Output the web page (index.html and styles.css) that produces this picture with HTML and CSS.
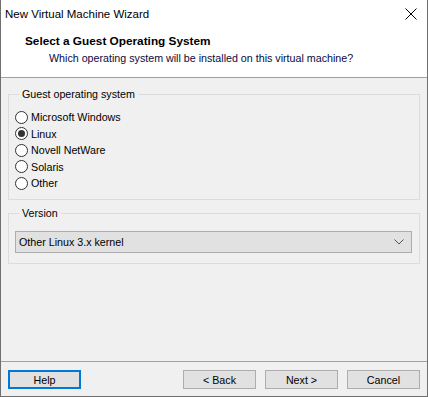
FILE: index.html
```html
<!DOCTYPE html>
<html lang="en">
<head>
    <meta charset="UTF-8">
    <meta name="viewport" content="width=device-width, initial-scale=1.0">
    <title>New Virtual Machine Wizard</title>
    <link rel="stylesheet" href="styles.css">
</head>
<body>
    <div class="window">
        <div class="titlebar">
            <span class="title">New Virtual Machine Wizard</span>
            <svg class="close" width="12" height="12" viewBox="0 0 12 12">
                <path d="M0.5 0.5 L11.5 11.5 M11.5 0.5 L0.5 11.5" stroke="#000" stroke-width="1" fill="none"/>
            </svg>
        </div>

        <div class="header">
            <h1>Select a Guest Operating System</h1>
            <p>Which operating system will be installed on this virtual machine?</p>
        </div>

        <div class="content">
            <fieldset class="group">
                <legend>Guest operating system</legend>
                <label class="radio"><span class="dot"></span>Microsoft Windows</label>
                <label class="radio checked"><span class="dot"></span>Linux</label>
                <label class="radio"><span class="dot"></span>Novell NetWare</label>
                <label class="radio"><span class="dot"></span>Solaris</label>
                <label class="radio"><span class="dot"></span>Other</label>
            </fieldset>

            <fieldset class="group version">
                <legend>Version</legend>
                <div class="combo">
                    <span>Other Linux 3.x kernel</span>
                    <svg width="10" height="6" viewBox="0 0 10 6">
                        <path d="M0.5 0.5 L5 5 L9.5 0.5" stroke="#555" stroke-width="1" fill="none"/>
                    </svg>
                </div>
            </fieldset>
        </div>

        <div class="footer">
            <button class="btn default">Help</button>
            <div class="spacer"></div>
            <button class="btn">&lt; Back</button>
            <button class="btn">Next &gt;</button>
            <button class="btn">Cancel</button>
        </div>
    </div>
</body>
</html>
```

FILE: styles.css
```css
body {
    margin: 0;
    padding: 0;
    font-family: "Liberation Sans", Arial, sans-serif;
    font-size: 10.7px;
    color: #000;
    background-color: #fff;
}
.window {
    width: 428px;
    height: 397px;
    box-sizing: border-box;
    border: 1px solid #6f6f6f;
    border-top: none;
    display: flex;
    flex-direction: column;
    background-color: #f0f0f0;
}
.titlebar {
    height: 30px;
    background-color: #fff;
    display: flex;
    align-items: center;
    padding: 0 10px 0 4px;
}
.title {
    flex: 1;
    font-size: 11.5px;
    margin-top: -3px;
}
.close {
    margin-top: -3px;
}
.header {
    background-color: #fff;
    height: 47px;
    border-bottom: 1px solid #a0a0a0;
    padding-left: 24px;
}
.header h1 {
    font-size: 11.8px;
    font-weight: bold;
    margin: 4px 0 0 0;
    line-height: 15px;
}
.header p {
    margin: 2px 0 0 24px;
    line-height: 15px;
    color: #0a0a40;
}
.content {
    flex: 1;
    padding: 9px 7px 0 7px;
}
.group {
    margin: 0;
    padding: 0 7px 7px 6px;
    border: 1px solid #dcdcdc;
    min-width: 0;
}
.group legend {
    padding: 0 3px;
    margin-left: 4px;
    line-height: 15px;
}
.radio {
    display: flex;
    align-items: center;
    height: 16.5px;
    gap: 3px;
}
.radio:first-of-type {
    margin-top: 7px;
}
.dot {
    width: 11px;
    height: 11px;
    border: 1px solid #333;
    border-radius: 50%;
    background-color: #fff;
    display: flex;
    align-items: center;
    justify-content: center;
}
.radio.checked .dot::after {
    content: "";
    width: 7px;
    height: 7px;
    border-radius: 50%;
    background-color: #333;
}
.version {
    margin-top: 6px;
    padding-bottom: 10px;
}
.combo {
    margin-top: 10px;
    height: 20px;
    border: 1px solid #adadad;
    background-color: #e1e1e1;
    display: flex;
    align-items: center;
    justify-content: space-between;
    padding: 0 7px 0 3px;
}
.footer {
    border-top: 1px solid #a0a0a0;
    height: 35px;
    box-sizing: border-box;
    padding: 8px 7px 0 7px;
    display: flex;
    align-items: flex-start;
    gap: 9px;
}
.spacer {
    flex: 1;
}
.btn {
    width: 73px;
    height: 19px;
    box-sizing: border-box;
    border: 1px solid #adadad;
    background-color: #e1e1e1;
    font-family: "Liberation Sans", Arial, sans-serif;
    font-size: 10.7px;
    color: #000;
    padding: 0;
}
.btn.default {
    border: 2px solid #0078d7;
}
```
